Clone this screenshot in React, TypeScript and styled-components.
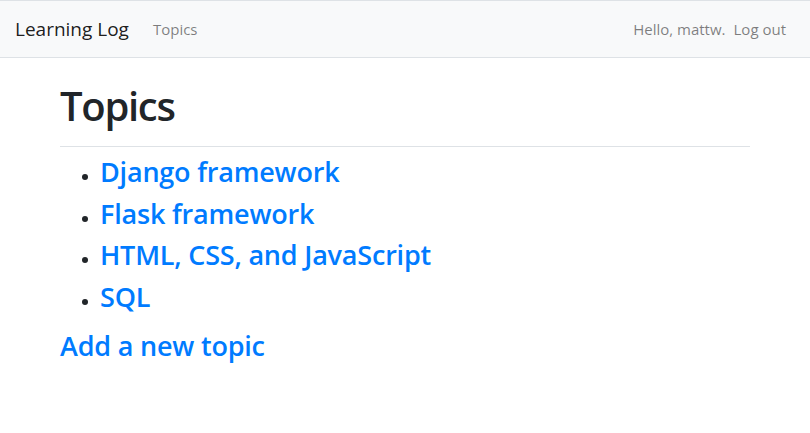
import React from "react"
import styled, { createGlobalStyle } from "styled-components"

const GlobalStyle = createGlobalStyle`
  html, body {
    margin: 0;
    padding: 0;
    background: #fff;
  }
  body {
    font-family: "Open Sans", "Noto Sans", sans-serif;
    font-size: 16px;
    line-height: 1.5;
    color: #212529;
  }
  * {
    box-sizing: border-box;
  }
`

const Navbar = styled.nav`
  display: flex;
  align-items: center;
  justify-content: space-between;
  padding: 8px 16px 8px 15px;
  background-color: #f8f9fa;
  border-top: 1px solid #dee2e6;
  border-bottom: 1px solid #dee2e6;
  margin-bottom: 24px;
`

const NavGroup = styled.div`
  display: flex;
  align-items: center;
`

const Brand = styled.a`
  display: inline-block;
  padding: 5px 0;
  margin-right: 16px;
  font-size: 19px;
  line-height: 30px;
  color: rgba(0, 0, 0, 0.9);
  text-decoration: none;
  white-space: nowrap;
`

const NavLink = styled.a`
  display: block;
  padding: 8px;
  font-size: 15px;
  color: rgba(0, 0, 0, 0.5);
  text-decoration: none;
`

const NavText = styled.span`
  display: inline-block;
  padding: 8px 0;
  font-size: 15px;
  color: rgba(0, 0, 0, 0.5);
`

const Container = styled.main`
  max-width: 720px;
  margin: 0 auto;
  padding: 0 15px;
`

const PageHeader = styled.div`
  padding-bottom: 8px;
  margin-bottom: 8px;
  border-bottom: 1px solid #dee2e6;
`

const Title = styled.h1`
  margin: 0 0 8px;
  font-size: 40px;
  font-weight: 600;
  line-height: 1.2;
  letter-spacing: -1.3px;
`

const TopicList = styled.ul`
  margin: 0 0 16px;
  padding-left: 40px;
`

const Heading = styled.h3`
  margin: 0 0 8px;
  font-size: 27px;
  font-weight: 600;
  line-height: 1.245;
  letter-spacing: -0.2px;
`

const TopicLink = styled.a`
  color: #007bff;
  text-decoration: none;
`

const topics = [
  "Django framework",
  "Flask framework",
  "HTML, CSS, and JavaScript",
  "SQL",
]

export default function App() {
  return (
    <>
      <GlobalStyle />
      <Navbar>
        <NavGroup>
          <Brand href="#">Learning Log</Brand>
          <NavLink href="#">Topics</NavLink>
        </NavGroup>
        <NavGroup>
          <NavText>Hello, mattw.</NavText>
          <NavLink href="#">Log out</NavLink>
        </NavGroup>
      </Navbar>
      <Container>
        <PageHeader>
          <Title>Topics</Title>
        </PageHeader>
        <TopicList>
          {topics.map((t) => (
            <li key={t}>
              <Heading>
                <TopicLink href="#">{t}</TopicLink>
              </Heading>
            </li>
          ))}
        </TopicList>
        <Heading>
          <TopicLink href="#">Add a new topic</TopicLink>
        </Heading>
      </Container>
    </>
  )
}
